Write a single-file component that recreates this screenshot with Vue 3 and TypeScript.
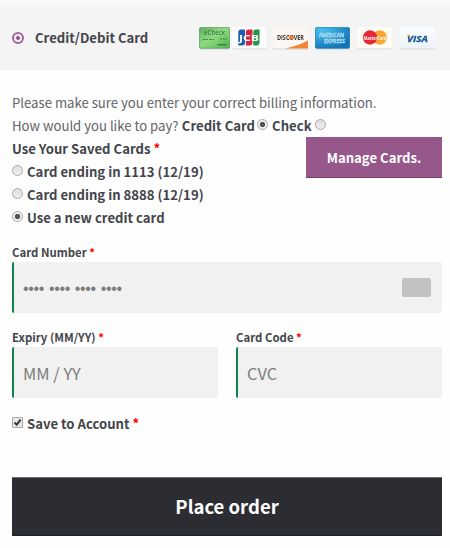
<script setup lang="ts">
import { ref } from 'vue'

const payBy = ref('card')
const selectedCard = ref('new')
const saveToAccount = ref(true)
const savedCards = [
  { id: '1113', label: 'Card ending in 1113 (12/19)' },
  { id: '8888', label: 'Card ending in 8888 (12/19)' },
  { id: 'new', label: 'Use a new credit card' },
]
</script>

<template>
  <main class="checkout">
    <header class="method">
      <span class="method-radio"></span>
      <strong class="method-title">Credit/Debit Card</strong>
      <div class="brands">
        <svg class="brand echeck" viewBox="0 0 31 22">
          <defs>
            <linearGradient id="ec" x1="0" y1="0" x2="1" y2="1">
              <stop offset="0" stop-color="#5caa60" />
              <stop offset=".45" stop-color="#8fdb83" />
              <stop offset="1" stop-color="#50b24c" />
            </linearGradient>
          </defs>
          <rect x=".4" y=".4" width="30.2" height="20.8" rx="1.5" fill="url(#ec)" stroke="#629e62" stroke-width=".8" />
          <text x="5" y="8.2" font-size="7.2" textLength="21" lengthAdjust="spacingAndGlyphs" fill="#27633b">eCheck</text>
          <path d="M4 12.5h5M10 12.5h5M21 12h7" stroke="#397f43" stroke-width="1.2" stroke-dasharray="2 .6" />
          <path d="M18.5 17.8h9" stroke="#286634" stroke-width="1" />
        </svg>
        <svg class="brand jcb" viewBox="0 0 34 22">
          <rect width="34" height="21.500" rx="1.5" fill="#fcfcfe" />
          <path d="M9 2.500h4v13q0 3-3 3H6.300V5.500q0-3 2.700-3z" fill="#1d5fae" />
          <path d="M16.500 2.500h4v13q0 3-3 3h-3.700v-13q0-3 2.700-3z" fill="#d6263d" />
          <path d="M24 2.500h3.500v13q0 3-3 3h-3.200v-13q0-3 2.700-3z" fill="#249447" />
          <text x="7" y="13.600" font-size="8" font-weight="700" textLength="20" lengthAdjust="spacingAndGlyphs" fill="#fff">JCB</text>
        </svg>
        <svg class="brand discover" viewBox="0 0 35 22">
          <rect width="35" height="21.500" rx="1.5" fill="#fcf7f2" />
          <path d="M12 21.500Q25 19 35 13.500v7q0 1-1 1z" fill="#f58434" />
          <text x="4" y="12.800" font-size="6.200" font-weight="700" textLength="27" lengthAdjust="spacingAndGlyphs" fill="#383536">DISCOVER</text>
          <circle cx="18.200" cy="10.500" r="2.200" fill="#f57b2c" />
        </svg>
        <svg class="brand amex" viewBox="0 0 35 22">
          <defs>
            <radialGradient id="ax" cx=".2" cy=".15" r=".95">
              <stop offset="0" stop-color="#47c1ee" />
              <stop offset="1" stop-color="#1273b5" />
            </radialGradient>
          </defs>
          <rect x=".4" y=".4" width="34.200" height="20.800" rx="1.500" fill="url(#ax)" stroke="#1780bd" stroke-width=".8" />
          <g fill="#8fcdea" stroke="#b9e0f2" stroke-width=".3" font-size="5" font-weight="700">
            <text x="4" y="10.200" textLength="25" lengthAdjust="spacingAndGlyphs">AMERICAN</text>
            <text x="9" y="15.700" textLength="21" lengthAdjust="spacingAndGlyphs">EXPRESS</text>
          </g>
        </svg>
        <svg class="brand mastercard" viewBox="0 0 35 22">
          <rect width="35" height="21.500" rx="1.500" fill="#fffcf5" />
          <circle cx="22.800" cy="10.500" r="7.200" fill="#faa630" />
          <circle cx="13" cy="10.500" r="7.200" fill="#e62735" />
          <text x="6.500" y="12.600" font-size="5.500" font-weight="700" textLength="23" lengthAdjust="spacingAndGlyphs" fill="#fff">MasterCard</text>
        </svg>
        <svg class="brand visa" viewBox="0 0 35 22">
          <defs>
            <linearGradient id="vi" x2="0" y2="1">
              <stop stop-color="#fbfdff" />
              <stop offset="1" stop-color="#edf3fa" />
            </linearGradient>
          </defs>
          <rect width="35" height="21.500" rx="1.500" fill="url(#vi)" />
          <text x="7" y="14.600" font-size="9.500" font-weight="700" font-style="italic" textLength="21" lengthAdjust="spacingAndGlyphs" fill="#18589d" stroke="#18589d" stroke-width=".3">VISA</text>
          <path d="M6.800 7.700h3l1.200 3.500z" fill="#efa52e" />
        </svg>
      </div>
    </header>

    <section class="details">
      <p class="line intro">Please make sure you enter your correct billing information.</p>
      <div class="line pay">
        <span class="question">How would you like to pay?</span>
        <label class="bold pay-card" @click="payBy = 'card'">Credit Card</label>
        <span class="radio" :class="{ on: payBy === 'card' }" @click="payBy = 'card'"></span>
        <label class="bold pay-check" @click="payBy = 'check'">Check</label>
        <span class="radio" :class="{ on: payBy === 'check' }" @click="payBy = 'check'"></span>
      </div>

      <div class="saved">
        <div class="saved-list">
          <div class="line bold"><span class="saved-title">Use Your Saved Cards</span> <span class="req">*</span></div>
          <div v-for="card in savedCards" :key="card.id" class="line bold option" @click="selectedCard = card.id">
            <span class="radio" :class="{ on: selectedCard === card.id }"></span>
            <span class="option-label">{{ card.label }}</span>
          </div>
        </div>
        <button class="manage">Manage Cards.</button>
      </div>

      <div class="field number">
        <label class="field-label">Card Number <span class="req">*</span></label>
        <div class="input">
          <span class="dots">•••• •••• •••• ••••</span>
          <i class="card-chip"></i>
        </div>
      </div>
      <div class="field-row">
        <div class="field">
          <label class="field-label">Expiry (MM/YY) <span class="req">*</span></label>
          <div class="input"><span>MM / YY</span></div>
        </div>
        <div class="field">
          <label class="field-label">Card Code <span class="req">*</span></label>
          <div class="input"><span>CVC</span></div>
        </div>
      </div>

      <div class="line bold option save" @click="saveToAccount = !saveToAccount">
        <span class="checkbox">
          <svg v-if="saveToAccount" viewBox="0 0 11 11"><path d="M1.800 5.500l2.700 2.700L9.300 2" fill="none" stroke="#3c3c3c" stroke-width="2.500" /></svg>
        </span>
        <span class="option-label">Save to Account <span class="req">*</span></span>
      </div>

      <button class="place">Place order</button>
    </section>
  </main>
</template>

<style>
body {
  background: #fefefe;
}
</style>

<style scoped>
.checkout {
  box-sizing: border-box;
  width: 450px;
  height: 548px;
  overflow: hidden;
  border-top: 5px solid #f9f9f9;
  font-family: "Noto Sans CJK SC", "Open Sans", sans-serif;
  font-size: 13.15px;
  color: #626467;
  white-space: nowrap;
}
.method {
  box-sizing: border-box;
  height: 65px;
  padding: 0 15px 0 12px;
  display: flex;
  align-items: center;
  background: #f4f4f4;
  border-top: 1px solid #f6f6f6;
}
.method-radio {
  box-sizing: border-box;
  width: 12px;
  height: 12px;
  border: 2px solid #a264a0;
  border-radius: 50%;
  background: radial-gradient(circle, #96588a 0 1.7px, transparent 2.2px);
}
.method-title {
  margin-left: 11px;
  line-height: 24px;
  color: #43454b;
}
.brands {
  margin-left: auto;
  display: flex;
  font-family: "Open Sans", sans-serif;
}
.brand {
  display: block;
  width: 35px;
  height: 22px;
  margin-left: 7px;
  overflow: visible;
  filter: drop-shadow(0 1px 0.5px #d8d8d8);
}
.echeck { width: 31px; }
.jcb { width: 34px; margin-left: 1.5px; }
.discover { margin-left: 7.5px; }
.visa { margin-left: 8px; }
.details {
  padding: 21px 8px 0 12px;
}
.line {
  margin: 0;
  height: 23px;
  line-height: 23px;
}
.bold {
  font-weight: 700;
  color: #43454b;
}
.pay {
  display: flex;
}
.pay-card { margin-left: 3.3px; }
.pay-check { margin-left: 4px; }
.radio {
  box-sizing: border-box;
  flex: none;
  width: 11px;
  height: 11px;
  margin-top: 5px;
  border: 1px solid #aaa;
  border-radius: 50%;
  background: linear-gradient(#dedede, #eee);
}
.radio.on {
  background: radial-gradient(circle, #555 0 2.3px, transparent 3px), #eee;
}
.pay .radio { margin-left: 3.3px; }
.pay .pay-card + .radio { margin-left: 2px; }
.saved {
  display: flex;
  justify-content: space-between;
  align-items: flex-start;
}
.manage {
  box-sizing: border-box;
  width: 136px;
  height: 41px;
  padding: 1px 0 0;
  border: 0;
  border-bottom: 1px solid #76406d;
  background: #96588a;
  color: #fff;
  font: 700 13.15px/39px "Noto Sans CJK SC", sans-serif;
}
.req { color: #f00; }
.option {
  display: flex;
}
.option-label { margin-left: 4px; }
.field-label {
  display: block;
  height: 20px;
  line-height: 20px;
  font-size: 11.4px;
  font-weight: 700;
  color: #43454b;
}
.number { margin-top: 13px; }
.input {
  box-sizing: border-box;
  height: 51px;
  padding: 0 11px 0 9px;
  display: flex;
  align-items: center;
  justify-content: space-between;
  border-left: 2px solid #0f834d;
  border-radius: 2px;
  background: #f1f1f1;
  color: #7c7c7c;
  font-size: 16.4px;
  line-height: 24px;
}
.dots {
  padding-top: 2px;
  font-family: "Liberation Sans", sans-serif;
  font-size: 16px;
  letter-spacing: -0.35px;
  word-spacing: 0.8px;
}
.card-chip {
  width: 29px;
  height: 19px;
  border-radius: 2px;
  background: #c2c2c2;
}
.field-row {
  display: grid;
  grid-template-columns: 206px 206px;
  column-gap: 18px;
  margin-top: 14px;
}
.save { margin-top: 14px; }
.checkbox {
  box-sizing: border-box;
  width: 11px;
  height: 11px;
  margin-top: 5px;
  border: 1px solid #aaa;
  border-radius: 1px;
  background: #e8e8e8;
}
.checkbox svg {
  display: block;
  width: 9px;
  height: 9px;
}
.place {
  display: block;
  box-sizing: border-box;
  width: 430px;
  height: 59px;
  margin-top: 42px;
  padding: 0;
  border: 0;
  border-top: 1px solid #6b6c70;
  border-bottom: 1px solid #1f1f24;
  background: #2c2d33;
  color: #fff;
  font: 700 18.500px/57px "Noto Sans CJK SC", sans-serif;
}
</style>
